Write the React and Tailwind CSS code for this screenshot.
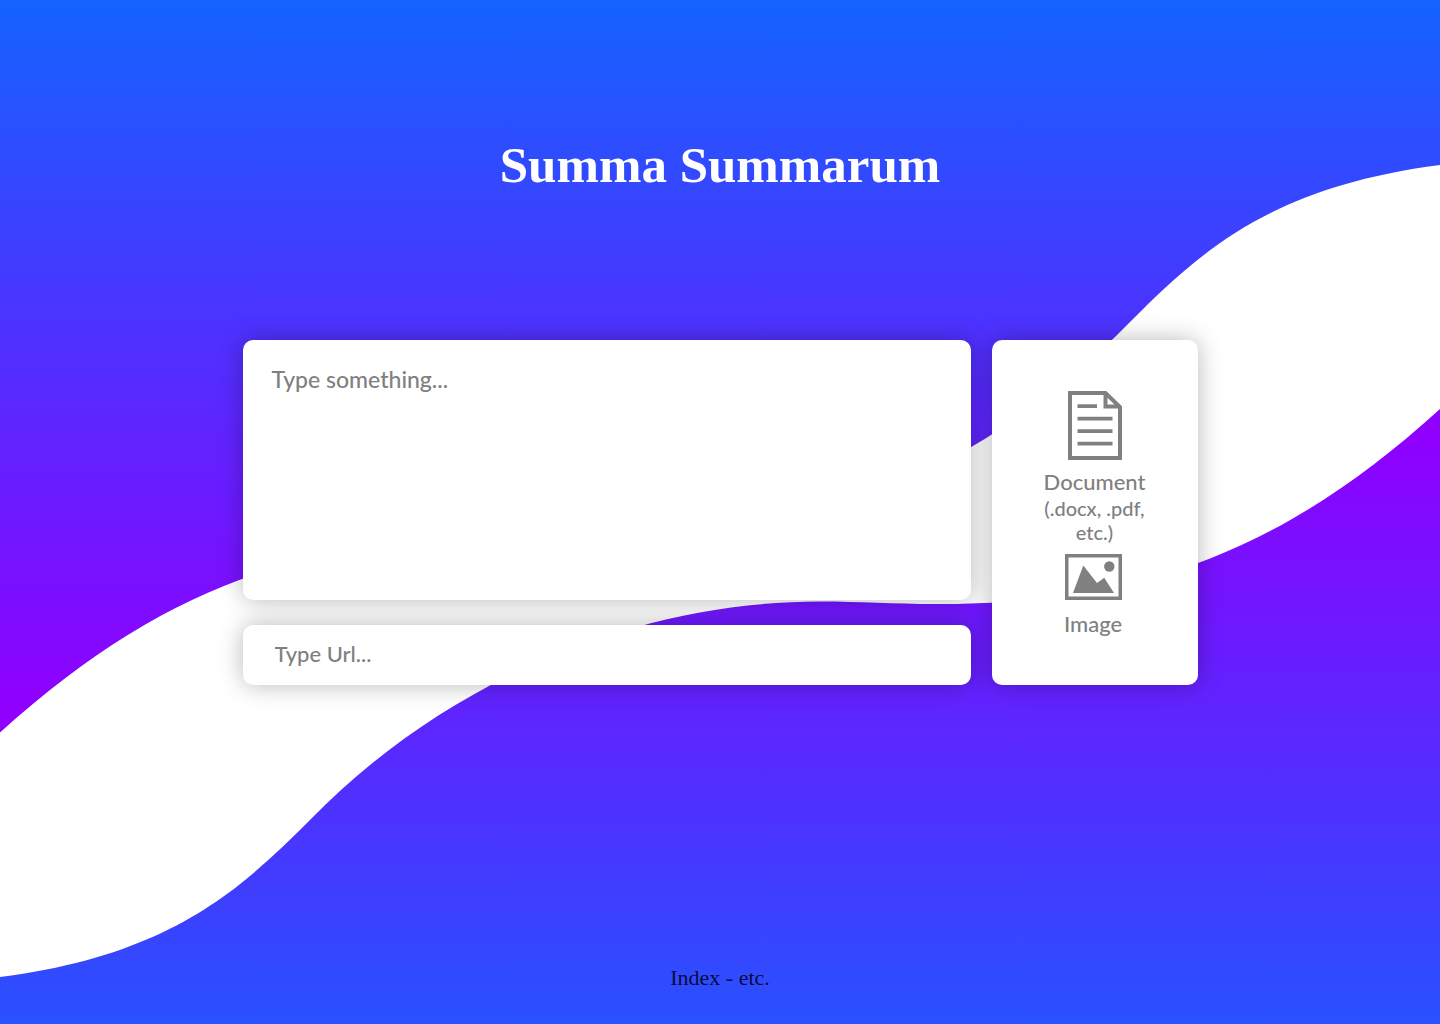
import React from "react";

const panel =
  "rounded-[10px] bg-white shadow-[0_0_25px_rgba(0,0,0,0.28)]";
const placeholder =
  "text-[#808080] placeholder:text-[#808080] placeholder:opacity-100";

function Waves() {
  return (
    <svg
      className="absolute inset-0 -z-10 h-full w-full"
      viewBox="0 0 1440 1024"
      preserveAspectRatio="none"
      aria-hidden="true"
    >
      <defs>
        <linearGradient id="fall" gradientUnits="userSpaceOnUse" x1="0" y1="0" x2="0" y2="732">
          <stop offset="0" stopColor="#1463ff" />
          <stop offset="0.45" stopColor="#4d32ff" />
          <stop offset="0.96" stopColor="#8f00ff" />
        </linearGradient>
        <linearGradient id="rise" gradientUnits="userSpaceOnUse" x1="0" y1="1141" x2="0" y2="409">
          <stop offset="0" stopColor="#1463ff" />
          <stop offset="0.45" stopColor="#4d32ff" />
          <stop offset="0.96" stopColor="#8f00ff" />
        </linearGradient>
      </defs>
      <path
        fill="url(#fall)"
        d="M1440 165C1270 187 1200 252 1130 322C994 462 820 540 620 540C580 540 545 537.5 505 537.5C315 537.5 167 581 0 732.5V0H1440Z"
      />
      <path
        fill="url(#rise)"
        d="M0 977C170 955 240 890 310 820C446 680 636 601.5 820 601.5C860 601.5 895 604 935 604C1130 604 1275 559 1440 409V1024H0Z"
      />
    </svg>
  );
}

function DocumentIcon() {
  return (
    <svg width="54" height="69" viewBox="0 0 54 69" fill="none" stroke="#808080" aria-hidden="true">
      <path strokeWidth="4" d="M37.5 2H2V67H52V16L37.5 2V15.500H52" />
      <path strokeWidth="3.800" d="M9.500 15.200H29M9.500 27.700H44.500M9.500 40.200H44.500M9.500 52.700H44.500" />
    </svg>
  );
}

function ImageIcon() {
  return (
    <svg width="57" height="46" viewBox="0 0 57 46" aria-hidden="true">
      <rect x="1.750" y="1.750" width="53.500" height="42.500" fill="none" stroke="#808080" strokeWidth="3.500" />
      <path fill="#808080" d="M8 39L18.300 11.500L32 29L39.200 23.800L49 39Z" />
      <circle cx="44.300" cy="12.500" r="5.200" fill="#808080" />
    </svg>
  );
}

export default function App() {
  return (
    <div className="relative isolate flex min-h-screen flex-col items-center overflow-hidden bg-white px-6 font-['Lato',sans-serif]">
      <Waves />
      <h1 className="mt-[135px] text-center font-['Liberation_Serif',serif] text-[51px] leading-[60px] font-bold text-white">
        Summa Summarum
      </h1>

      <main className="mt-[145px] grid w-full max-w-[955px] grid-cols-[minmax(0,1fr)_206px] gap-[21px]">
        <form className="flex flex-col gap-[25px]">
          <textarea
            aria-label="Text"
            placeholder="Type something..."
            className={`${panel} ${placeholder} block min-h-[260px] w-full grow resize-none px-[29px] py-6 text-[23px] leading-[30px] font-medium outline-none`}
          />
          <input
            type="url"
            aria-label="Url"
            placeholder="Type Url..."
            className={`${panel} ${placeholder} h-[60px] w-full px-8 pb-1 text-[22px] font-medium outline-none`}
          />
        </form>

        <section aria-label="Upload" className={`${panel} flex flex-col items-center px-10 pt-[51px] pb-11 text-[#808080]`}>
          <button type="button" className="flex flex-col items-center font-medium">
            <DocumentIcon />
            <span className="mt-2 text-[22px] leading-7">Document</span>
            <span className="text-xl leading-6">
              (.docx, .pdf,
              <br />
              etc.)
            </span>
          </button>
          <button type="button" className="mt-[10px] flex flex-col items-center pr-[3px] text-[22px] leading-7 font-medium">
            <ImageIcon />
            <span className="mt-[10px]">Image</span>
          </button>
        </section>
      </main>

      <footer className="mt-auto pb-8 font-['Liberation_Serif',serif] text-[22px] leading-7 text-[#0a0a3c]">
        Index - etc.
      </footer>
    </div>
  );
}
